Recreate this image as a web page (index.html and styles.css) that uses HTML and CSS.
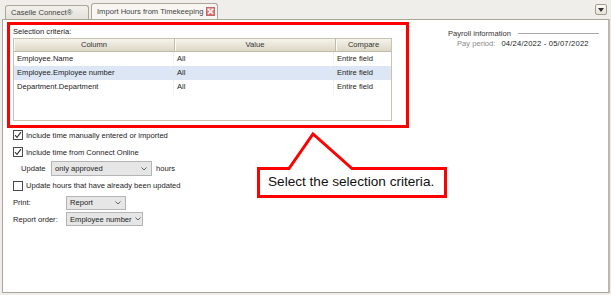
FILE: index.html
```html
<!DOCTYPE html>
<html lang="en">
<head>
    <meta charset="UTF-8">
    <title>Import Hours from Timekeeping</title>
    <link rel="stylesheet" href="styles.css">
</head>
<body>
    <div class="window">
        <div class="tabstrip">
            <div class="tab">Caselle Connect®</div>
            <div class="tab tab-active">
                <span>Import Hours from Timekeeping</span>
                <span class="tab-close">
                    <svg width="7" height="7" viewBox="0 0 7 7"><path d="M1 1L6 6M6 1L1 6" stroke="#fff" stroke-width="1.6"/></svg>
                </span>
            </div>
            <div class="strip-menu">
                <svg width="6" height="4" viewBox="0 0 6 4"><path d="M0 0H6L3 4Z" fill="#333"/></svg>
            </div>
        </div>

        <div class="panel">
            <div class="main">
                <div class="label">Selection criteria:</div>
                <div class="grid">
                    <div class="grid-head">
                        <div class="col-name">Column</div>
                        <div class="col-value">Value</div>
                        <div class="col-compare">Compare</div>
                    </div>
                    <div class="grid-row">
                        <div class="col-name">Employee.Name</div>
                        <div class="col-value">All</div>
                        <div class="col-compare">Entire field</div>
                    </div>
                    <div class="grid-row selected">
                        <div class="col-name">Employee.Employee number</div>
                        <div class="col-value">All</div>
                        <div class="col-compare">Entire field</div>
                    </div>
                    <div class="grid-row">
                        <div class="col-name">Department.Department</div>
                        <div class="col-value">All</div>
                        <div class="col-compare">Entire field</div>
                    </div>
                </div>

                <div class="options">
                    <div class="opt">
                        <span class="check on"><svg width="8" height="8" viewBox="0 0 8 8"><path d="M1 4.2L3 6.3L7 1.2" fill="none" stroke="#333" stroke-width="1.1"/></svg></span>
                        <span>Include time manually entered or imported</span>
                    </div>
                    <div class="opt">
                        <span class="check on"><svg width="8" height="8" viewBox="0 0 8 8"><path d="M1 4.2L3 6.3L7 1.2" fill="none" stroke="#333" stroke-width="1.1"/></svg></span>
                        <span>Include time from Connect Online</span>
                    </div>
                    <div class="opt opt-indent">
                        <span class="upd-label">Update</span>
                        <span class="select select-update">
                            <span>only approved</span>
                            <svg width="6" height="4" viewBox="0 0 6 4"><path d="M0.5 0.5L3 3L5.5 0.5" fill="none" stroke="#555" stroke-width="0.9"/></svg>
                        </span>
                        <span class="hours">hours</span>
                    </div>
                    <div class="opt">
                        <span class="check"></span>
                        <span>Update hours that have already been updated</span>
                    </div>
                    <div class="opt">
                        <span class="field-label">Print:</span>
                        <span class="select select-print">
                            <span>Report</span>
                            <svg width="6" height="4" viewBox="0 0 6 4"><path d="M0.5 0.5L3 3L5.5 0.5" fill="none" stroke="#555" stroke-width="0.9"/></svg>
                        </span>
                    </div>
                    <div class="opt">
                        <span class="field-label">Report order:</span>
                        <span class="select select-order">
                            <span>Employee number</span>
                            <svg width="6" height="4" viewBox="0 0 6 4"><path d="M0.5 0.5L3 3L5.5 0.5" fill="none" stroke="#555" stroke-width="0.9"/></svg>
                        </span>
                    </div>
                </div>
            </div>

            <div class="payroll">
                <div class="payroll-title">
                    <span>Payroll information</span>
                    <span class="rule"></span>
                </div>
                <div class="pay-period">
                    <span class="pay-label">Pay period:</span>
                    <span class="pay-dates">04/24/2022 - 05/07/2022</span>
                </div>
            </div>
        </div>

        <!-- annotation -->
        <div class="highlight-box"></div>
        <svg class="callout" width="204" height="75" viewBox="0 0 204 75">
            <path d="M8.5 40.5H39L63 6L102 40.5H195.5V68.5H8.5Z" fill="#fff" stroke="#f00" stroke-width="3"/>
        </svg>
        <div class="callout-text">Select the selection criteria.</div>
    </div>
</body>
</html>
```

FILE: styles.css
```css
body {
    margin: 0;
    font-family: "Liberation Sans", Arial, sans-serif;
    font-size: 7.6px;
    color: #222;
    background: #fff;
}
.window {
    position: relative;
    width: 611px;
    height: 295px;
    background: #efeeea;
    display: flex;
    flex-direction: column;
    overflow: hidden;
    white-space: nowrap;
}

/* tabs */
.tabstrip {
    height: 19px;
    display: flex;
    align-items: flex-end;
    padding: 0 4px 0 5px;
    flex-shrink: 0;
}
.tab {
    box-sizing: border-box;
    width: 84px;
    height: 14px;
    border: 1px solid #aba698;
    border-bottom: none;
    border-radius: 3px 3px 0 0;
    background: linear-gradient(#f2f1ec, #e3e1d9);
    color: #444;
    padding: 0 5px;
    display: flex;
    align-items: center;
    line-height: 10px;
}
.tab-active {
    width: 127px;
    height: 16px;
    margin-left: 2px;
    background: #f7f6f2;
    justify-content: space-between;
    padding-right: 2px;
}
.tab-close {
    width: 9px;
    height: 9px;
    box-sizing: border-box;
    border: 1px solid #c26a6a;
    background: linear-gradient(#f09a9a, #dd6262);
    display: flex;
    align-items: center;
    justify-content: center;
}
.strip-menu {
    margin-left: auto;
    align-self: flex-start;
    margin-top: 4px;
    width: 12px;
    height: 11px;
    box-sizing: border-box;
    border: 1px solid #a39d8e;
    border-radius: 2px;
    background: linear-gradient(#faf9f5, #e6e3da);
    display: flex;
    align-items: center;
    justify-content: center;
}

/* main panel */
.panel {
    flex: 1;
    margin: 0 1px 2px 2px;
    border: 1px solid #a9a59a;
    border-right: 2px solid #bcb8ae;
    background: #fff;
    display: flex;
    padding: 7px 9px 0 10px;
}
.main {
    width: 379px;
    flex-shrink: 0;
}
.label {
    height: 10px;
    line-height: 10px;
    margin-bottom: 1px;
}
.grid {
    box-sizing: border-box;
    height: 83px;
    border: 1px solid #c8c2b3;
    background: #fff;
}
.grid-head,
.grid-row {
    display: flex;
}
.grid-head {
    height: 13px;
    box-sizing: border-box;
    border-bottom: 1px solid #c2bba9;
    background: linear-gradient(#f5f3ec, #ddd7c5);
    line-height: 12px;
    color: #333;
}
.grid-head > div {
    text-align: center;
    border-right: 1px solid #c2bba9;
    box-shadow: inset 1px 0 0 #fbfaf6;
}
.grid-head > div:last-child {
    border-right: none;
}
.grid-row {
    height: 14px;
    line-height: 14px;
}
.grid-row > div {
    padding-left: 3px;
    box-sizing: border-box;
    border-right: 1px dotted #e6e6e6;
}
.grid-row > div:last-child {
    border-right: none;
}
.grid-row.selected {
    background: #dce6f5;
}
.col-name {
    width: 160px;
}
.col-value {
    width: 160px;
}
.col-compare {
    flex: 1;
}

/* options */
.options {
    margin-top: 6px;
}
.opt {
    height: 16.8px;
    display: flex;
    align-items: center;
}
.check {
    box-sizing: border-box;
    width: 10px;
    height: 10px;
    border: 1px solid #4a4a4a;
    background: #fff;
    margin-right: 3px;
    display: flex;
    align-items: center;
    justify-content: center;
}
.opt-indent {
    padding-left: 8px;
}
.upd-label {
    width: 30px;
}
.hours {
    margin-left: 4px;
}
.field-label {
    width: 53px;
}
.select {
    box-sizing: border-box;
    height: 15px;
    border: 1px solid #b5b5b5;
    background: #e6e6e6;
    padding: 0 4px 0 3px;
    display: flex;
    align-items: center;
    justify-content: space-between;
    gap: 3px;
}
.select svg {
    flex-shrink: 0;
}
.select-update {
    width: 101px;
}
.select-print {
    width: 60px;
    height: 14px;
}
.select-order {
    width: 77px;
    height: 14px;
    padding-right: 3px;
}

/* payroll info */
.payroll {
    margin-left: auto;
    width: 151px;
    padding-top: 1px;
}
.payroll-title {
    display: flex;
    align-items: center;
    height: 10px;
    color: #333;
}
.rule {
    flex: 1;
    height: 1px;
    margin-left: 7px;
    background: #a8a8a8;
}
.pay-period {
    margin-top: 1px;
    padding-left: 9px;
    height: 10px;
    line-height: 10px;
    display: flex;
    gap: 6px;
}
.pay-label {
    flex-shrink: 0;
    color: #8a8a8a;
}
.pay-dates {
    letter-spacing: 0.2px;
}

/* annotation overlay */
.highlight-box {
    position: absolute;
    left: 7px;
    top: 22px;
    width: 402px;
    height: 106px;
    box-sizing: border-box;
    border: 3px solid #f00;
}
.callout {
    position: absolute;
    left: 250px;
    top: 128px;
}
.callout-text {
    position: absolute;
    left: 268px;
    top: 174px;
    font-size: 13.6px;
    line-height: 16px;
    color: #111;
}
```
